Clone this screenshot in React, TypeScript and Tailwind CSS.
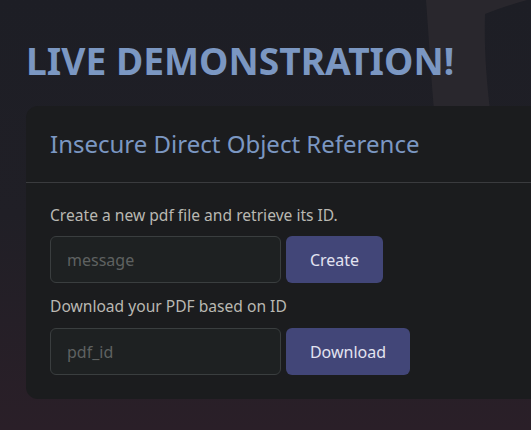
import React from "react"

function BackdropShape() {
  return (
    <svg
      className="absolute left-0 top-0 pointer-events-none"
      width="531"
      height="430"
      viewBox="0 0 531 430"
    >
      <path
        d="M426 0 C429 40 431 75 434 110 L490 110 C486 75 484 45 485 14 C500 8 515 3 531 -1 L531 0 Z"
        fill="#2e2b30"
        opacity="0.75"
      />
    </svg>
  )
}

export default function App() {
  return (
    <div
      className="relative w-[531px] h-[430px] overflow-hidden bg-gradient-to-b from-[#1d1e25] via-[#201f26] to-[#2a1f28]"
      style={{ fontFamily: '"Noto Sans", "Open Sans", sans-serif' }}
    >
      <BackdropShape />
      <div className="relative pl-[26px] pt-[37px]">
        <h1 className="text-[37.2px] leading-[48px] font-bold text-[#7b97c2]">
          LIVE DEMONSTRATION!
        </h1>
        <div className="mt-[21px] w-[560px] rounded-xl bg-[#1b1c1e]">
          <div className="px-6 py-5 border-b border-[#3a3b3e]">
            <h2 className="text-[24px] leading-9 text-[#7b97c2]">
              Insecure Direct Object Reference
            </h2>
          </div>
          <div className="px-6 pt-5 pb-6">
            <p className="text-[15.6px] leading-6 text-[#b9b8b2]">
              Create a new pdf file and retrieve its ID.
            </p>
            <div className="mt-[9px] flex gap-[5px]">
              <input
                placeholder="message"
                className="w-[231px] h-[47px] rounded-md border border-[#3a3e3f] bg-[#1e2122] px-4 text-[16px] text-[#ccc] placeholder:text-[#5e6161] outline-none"
              />
              <button className="h-[47px] w-[97px] rounded-md bg-[#424678] text-[16px] text-[#e2e3f0]">
                Create
              </button>
            </div>
            <p className="mt-[11px] text-[15.6px] leading-6 text-[#b9b8b2]">
              Download your PDF based on ID
            </p>
            <div className="mt-[10px] flex gap-[5px]">
              <input
                placeholder="pdf_id"
                className="w-[231px] h-[47px] rounded-md border border-[#3a3e3f] bg-[#1e2122] px-4 text-[16px] text-[#ccc] placeholder:text-[#5e6161] outline-none"
              />
              <button className="h-[47px] w-[124px] rounded-md bg-[#424678] text-[16px] text-[#e2e3f0]">
                Download
              </button>
            </div>
          </div>
        </div>
      </div>
    </div>
  )
}
